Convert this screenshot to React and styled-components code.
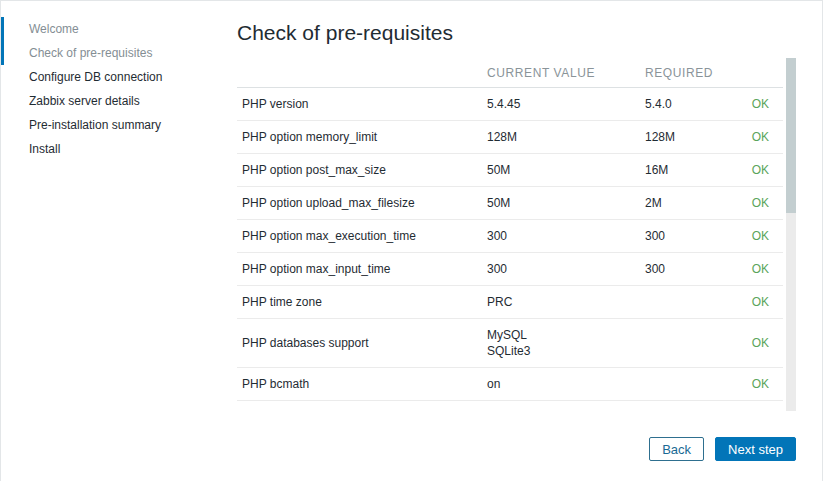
import React from "react";
import styled, { createGlobalStyle } from "styled-components";

const GlobalStyle = createGlobalStyle`
  html, body {
    margin: 0;
    padding: 0;
    background: #ffffff;
  }
  body {
    font-family: "Liberation Sans", Arial, sans-serif;
    font-size: 12px;
    color: #1f2c33;
  }
`;

const Frame = styled.div`
  box-sizing: border-box;
  width: 823px;
  height: 481px;
  border: 1px solid #e3e6e8;
  border-bottom: none;
  display: flex;
  overflow: hidden;
`;

const Steps = styled.ul`
  list-style: none;
  margin: 0;
  padding: 16px 0 0;
  width: 236px;
  flex: none;
`;

const Step = styled.li`
  height: 24px;
  line-height: 24px;
  padding-left: 25px;
  border-left: 3px solid ${(p) => (p.done ? "#0275b8" : "transparent")};
  color: ${(p) => (p.done ? "#848e94" : "#1f2c33")};
`;

const Main = styled.section`
  flex: 1;
  display: flex;
  flex-direction: column;
  padding: 20px 26px 0 0;
  min-width: 0;
`;

const Title = styled.h1`
  margin: 0 0 13px;
  font-size: 21px;
  line-height: 24px;
  font-weight: normal;
  color: #1f2c33;
`;

const ScrollArea = styled.div`
  display: flex;
  height: 353px;
`;

const Viewport = styled.div`
  flex: 1;
  overflow: hidden;
  margin-right: 3px;
`;

const ScrollTrack = styled.div`
  width: 10px;
  flex: none;
  background: #ebebeb;
`;

const ScrollThumb = styled.div`
  height: 155px;
  background: #c3ced0;
`;

const Table = styled.table`
  width: 100%;
  border-collapse: collapse;
  table-layout: fixed;

  th,
  td {
    text-align: left;
    vertical-align: middle;
    line-height: 16px;
  }

  th {
    padding: 7px 0 6px;
    font-weight: normal;
    color: #8a9499;
    letter-spacing: 0.6px;
    text-transform: uppercase;
    border-bottom: 1px solid #dde1e3;
  }

  td {
    padding: 8px 0;
    border-bottom: 1px solid #ebebeb;
  }

  td:first-child {
    padding-left: 5px;
  }
`;

const Col = styled.col`
  width: ${(p) => p.w}px;
`;

const Result = styled.td`
  && {
    text-align: right;
    padding-right: 14px;
    color: #5aa55a;
  }
`;

const Footer = styled.div`
  display: flex;
  justify-content: flex-end;
  gap: 11px;
  padding-top: 26px;
`;

const Button = styled.button`
  height: 24px;
  padding: 0 12px;
  font-family: "Liberation Sans", Arial, sans-serif;
  font-size: 13px;
  border-radius: 2px;
  border: 1px solid ${(p) => (p.primary ? "#0275b8" : "#2e6f8f")};
  background: ${(p) => (p.primary ? "#0275b8" : "#ffffff")};
  color: ${(p) => (p.primary ? "#ffffff" : "#1a6a94")};
  cursor: pointer;
`;

const STEPS = [
  { label: "Welcome", done: true },
  { label: "Check of pre-requisites", done: true },
  { label: "Configure DB connection" },
  { label: "Zabbix server details" },
  { label: "Pre-installation summary" },
  { label: "Install" }
];

const CHECKS = [
  ["PHP version", ["5.4.45"], "5.4.0"],
  ["PHP option memory_limit", ["128M"], "128M"],
  ["PHP option post_max_size", ["50M"], "16M"],
  ["PHP option upload_max_filesize", ["50M"], "2M"],
  ["PHP option max_execution_time", ["300"], "300"],
  ["PHP option max_input_time", ["300"], "300"],
  ["PHP time zone", ["PRC"], ""],
  ["PHP databases support", ["MySQL", "SQLite3"], ""],
  ["PHP bcmath", ["on"], ""]
];

export default function App() {
  return (
    <>
      <GlobalStyle />
      <Frame>
        <Steps>
          {STEPS.map((s) => (
            <Step key={s.label} done={s.done}>
              {s.label}
            </Step>
          ))}
        </Steps>
        <Main>
          <Title>Check of pre-requisites</Title>
          <ScrollArea>
            <Viewport>
              <Table>
                <colgroup>
                  <Col w={250} />
                  <Col w={158} />
                  <Col w={95} />
                  <col />
                </colgroup>
                <thead>
                  <tr>
                    <th />
                    <th>Current value</th>
                    <th>Required</th>
                    <th />
                  </tr>
                </thead>
                <tbody>
                  {CHECKS.map(([name, current, required]) => (
                    <tr key={name}>
                      <td>{name}</td>
                      <td>
                        {current.map((v) => (
                          <div key={v}>{v}</div>
                        ))}
                      </td>
                      <td>{required}</td>
                      <Result>OK</Result>
                    </tr>
                  ))}
                </tbody>
              </Table>
            </Viewport>
            <ScrollTrack>
              <ScrollThumb />
            </ScrollTrack>
          </ScrollArea>
          <Footer>
            <Button>Back</Button>
            <Button primary>Next step</Button>
          </Footer>
        </Main>
      </Frame>
    </>
  );
}
